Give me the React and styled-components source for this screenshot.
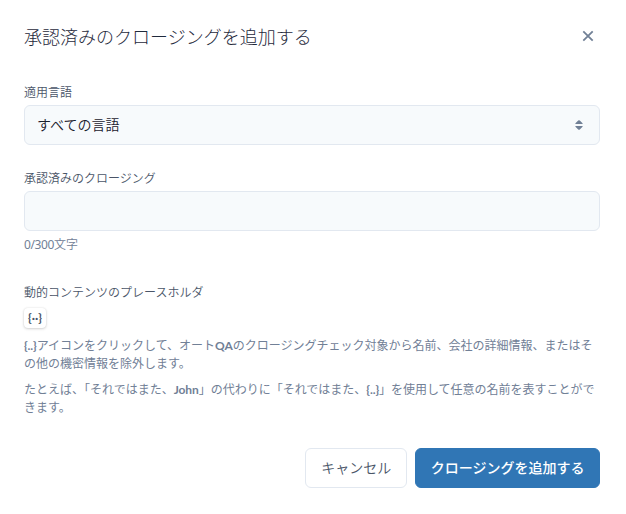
import React, { useState } from 'react';
import styled, { createGlobalStyle } from 'styled-components';

const GlobalStyle = createGlobalStyle`
  * {
    box-sizing: border-box;
  }

  body {
    margin: 0;
    background: #fff;
    font-family: 'Noto Sans', 'Noto Sans CJK JP', sans-serif;
  }
`;

const App = () => {
    const [closing, setClosing] = useState('');

    return (
        <Dialog lang="ja">
            <GlobalStyle />
            <Header>
                <Title>承認済みのクロージングを追加する</Title>
                <CloseButton aria-label="閉じる">
                    <svg width="12" height="12" viewBox="0 0 12 12">
                        <path d="M1.3 1.3 10.7 10.7M10.7 1.3 1.3 10.7" stroke="currentColor" strokeWidth="1.8" />
                    </svg>
                </CloseButton>
            </Header>

            <Field>
                <Label>適用言語</Label>
                <Select>
                    <SelectValue>すべての言語</SelectValue>
                    <svg width="8" height="10" viewBox="0 0 8 10">
                        <path d="M0.3 4 Q0.3 3.4 0.7 3 L3.2 0.6 Q4 -0.1 4.8 0.6 L7.3 3 Q7.7 3.4 7.7 4Z M0.3 6 Q0.3 6.6 0.7 7 L3.2 9.4 Q4 10.1 4.8 9.4 L7.3 7 Q7.7 6.6 7.7 6Z" fill="#718096" />
                    </svg>
                </Select>
            </Field>

            <Field>
                <Label>承認済みのクロージング</Label>
                <Input maxLength={300} value={closing} onChange={(e) => setClosing(e.target.value)} />
                <Counter><Count>{`${closing.length}/300`}</Count>文字</Counter>
            </Field>

            <Label>動的コンテンツのプレースホルダ</Label>
            <PlaceholderButton onClick={() => setClosing(closing + '{..}')}>{'{··}'}</PlaceholderButton>
            <Help>
                <b>{'{..}'}</b>アイコンをクリックして、オート<b>QA</b>のクロージングチェック対象から名前、会社の詳細情報、またはその他の機密情報を除外します。
            </Help>
            <Help>
                たとえば、「それではまた、<b>John</b>」の代わりに「それではまた、<b>{'{..}'}</b>」を使用して任意の名前を表すことができます。
            </Help>

            <Footer>
                <Button>キャンセル</Button>
                <Button $primary>クロージングを追加する</Button>
            </Footer>
        </Dialog>
    );
};

const Dialog = styled.div`
  display: flex;
  flex-direction: column;
  height: 514px;
  padding: 22px 26px 26px 24px;
  background: #fff;
`;

const Header = styled.div`
  display: flex;
  align-items: center;
  justify-content: space-between;
  height: 30px;
  margin-bottom: 32px;
`;

const Title = styled.h1`
  margin: 0;
  color: #1f2a3c;
  font-size: 18px;
  font-weight: 300;
  line-height: 30px;
`;

const CloseButton = styled.button`
  display: flex;
  padding: 0;
  margin: 0 6px 2px 0;
  border: none;
  background: none;
  color: #718096;
  cursor: pointer;
`;

const Field = styled.div`
  display: flex;
  flex-direction: column;
  margin-bottom: 25px;
`;

const Label = styled.label`
  height: 21px;
  color: #4a5568;
  font-size: 12px;
  font-weight: 350;
  line-height: 17px;
`;

const Select = styled.div`
  display: flex;
  align-items: center;
  justify-content: space-between;
  height: 40px;
  padding: 0 16px 0 12px;
  border: 1px solid #e2e8f0;
  border-radius: 6px;
  background: #f7fafc;
  color: #1a202c;
  font-size: 14px;
`;

const SelectValue = styled.span`
  padding-bottom: 2px;
  font-weight: 350;
`;

const Input = styled.input`
  height: 40px;
  padding: 0 12px;
  border: 1px solid #e2e8f0;
  border-radius: 6px;
  background: #f7fafc;
  font: inherit;
  font-size: 14px;
`;

const Counter = styled.span`
  height: 28px;
  color: #718096;
  font-size: 12px;
  font-weight: 350;
  line-height: 28px;
`;

const Count = styled.span`
  font-weight: 400;
  letter-spacing: -0.4px;
`;

// 差し込みアイコンのボタン
const PlaceholderButton = styled.button`
  width: 22px;
  height: 20px;
  flex-shrink: 0;
  margin: 3px 0 9px;
  padding: 0;
  border: none;
  border-radius: 4px;
  background: #fff;
  box-shadow: 0 1px 3px rgba(0, 0, 0, 0.16), 0 0 2px rgba(0, 0, 0, 0.1);
  color: #4a5568;
  font-family: Lato, sans-serif;
  font-size: 12px;
  font-weight: 700;
  line-height: 20px;
  cursor: pointer;
`;

const Help = styled.p`
  margin: 0 0 8px;
  color: #718096;
  font-size: 12px;
  font-weight: 400;
  line-height: 18px;

  b {
    font-family: Lato, sans-serif;
    font-weight: 700;
    letter-spacing: -0.1px;
    line-height: 1;
  }
`;

const Footer = styled.div`
  display: flex;
  justify-content: flex-end;
  gap: 8px;
  margin-top: auto;
`;

const Button = styled.button`
  height: 40px;
  padding: 0 ${(props) => (props.$primary ? '14.5px' : '15px')} 2px;
  border: 1px solid ${(props) => (props.$primary ? '#3076b5' : '#e2e8f0')};
  border-radius: 6px;
  background: ${(props) => (props.$primary ? '#3076b5' : '#fff')};
  color: ${(props) => (props.$primary ? '#fff' : '#4a5568')};
  font-family: inherit;
  font-size: 14px;
  font-weight: ${(props) => (props.$primary ? 500 : 350)};
  cursor: pointer;
`;

export default App;
